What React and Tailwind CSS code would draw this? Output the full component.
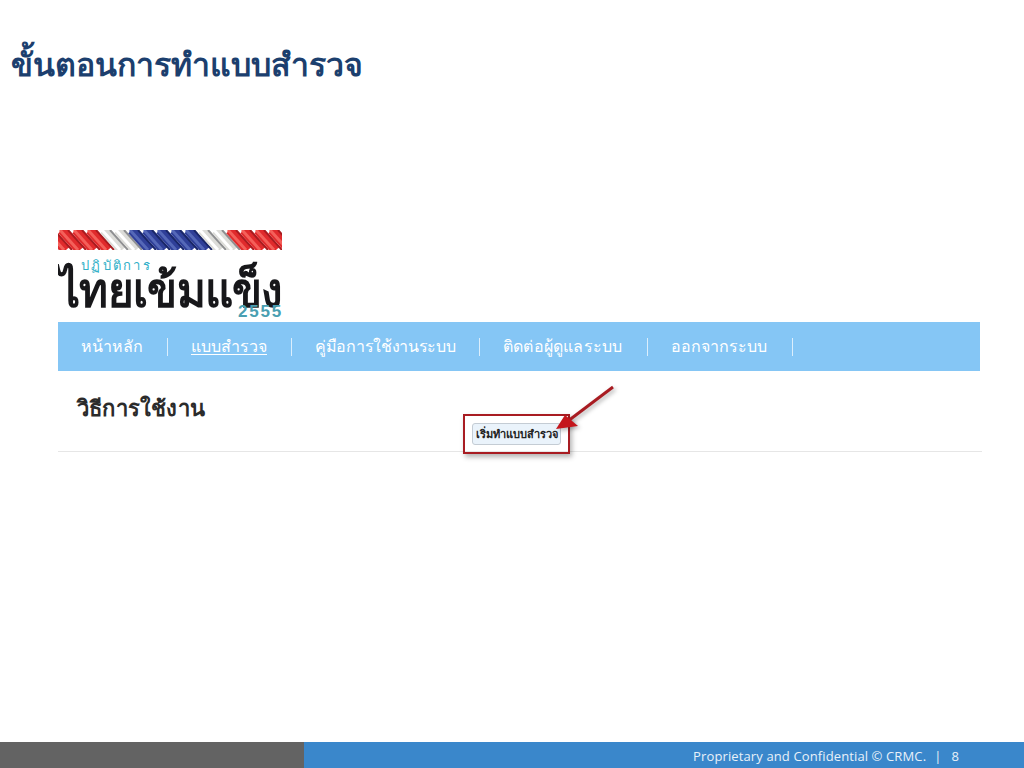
import React from "react";

const menu = [
  { label: "หน้าหลัก", cls: "w-[62px]" },
  { label: "แบบสำรวจ", cls: "w-[76px] underline underline-offset-2" },
  { label: "คู่มือการใช้งานระบบ", cls: "w-[140px] tracking-[-0.3px]" },
  { label: "ติดต่อผู้ดูแลระบบ", cls: "w-[120px] tracking-[0.2px]" },
  { label: "ออกจากระบบ", cls: "w-[97px]" },
];

const thai = "font-['Liberation_Sans','Noto_Sans','DejaVu_Sans',sans-serif]";

const red = ["#e02a2c", "#f4605a", "#a81c20"];
const white = ["#dcdcd8", "#ffffff", "#8f9092"];
const blue = ["#2f3f98", "#5568b8", "#1a2768"];

const ropeColor = (x) => {
  if (x < 40) return red;
  if (x < 72) return white;
  if (x < 132) return blue;
  if (x < 164) return white;
  return red;
};

// twisted rope strip from the logo
const Rope = () => {
  const strands = [];
  for (let x = -24; x < 240; x += 14) strands.push(x);
  return (
    <svg width="224" height="20" viewBox="0 0 224 20" className="block">
      {strands.map((x) => {
        const [base, light, dark] = ropeColor(x);
        return (
          <g key={x}>
            <path d={`M${x} 0l18 20`} stroke={base} strokeWidth="10" fill="none" />
            <path d={`M${x + 6} 0l18 20`} stroke={dark} strokeWidth="2" fill="none" />
            <path d={`M${x - 2} 0l18 20`} stroke={light} strokeWidth="3" fill="none" />
          </g>
        );
      })}
    </svg>
  );
};

const Logo = () => (
  <div className="w-[225px] h-[92px] overflow-hidden">
    <Rope />
    <div className={`relative h-[72px] ${thai}`}>
      <span className="absolute left-[23px] top-[9px] text-[13px] leading-none tracking-[2.3px] text-[#30b0c8]">ปฏิบัติการ</span>
      <span className="absolute left-0 top-[15px] text-[44px] leading-[50px] font-bold tracking-[-0.7px] scale-y-[1.1] text-[#17171a] whitespace-nowrap">ไทยเข้มแข็ง</span>
      <span className="absolute left-[180px] bottom-[2px] text-[17px] leading-none font-bold tracking-[1.8px] text-[#4a9fb2]">2555</span>
    </div>
  </div>
);

const App = () => {
  return (
    <div className="w-[1024px] h-[768px] bg-white flex flex-col overflow-hidden">
      <h1 className="pl-[11px] pt-[40px] h-[230px] text-[32px] leading-[50px] font-bold text-[#1c3f6e] font-['Liberation_Serif','Noto_Sans','DejaVu_Serif',serif]">
        ขั้นตอนการทำแบบสำรวจ
      </h1>

      <div className="pl-[58px] w-[982px] flex-1">
        <Logo />
        <nav className={`h-[49px] w-[922px] bg-[#85c6f5] flex items-center pl-[23px] text-[16px] text-white ${thai}`}>
          {menu.map((m) => (
            <React.Fragment key={m.label}>
              <span className={`whitespace-nowrap ${m.cls}`}>{m.label}</span>
              <span className="w-px h-[18px] bg-white/70 ml-[24px] mr-[23px]" />
            </React.Fragment>
          ))}
        </nav>
        <div className="relative h-[81px] w-[924px] border-b border-[#e6e6e6]">
          <h2 className={`pl-[19px] pt-[21px] text-[22px] tracking-[0.2px] leading-[34px] font-bold text-[#2b2b2b] ${thai}`}>วิธีการใช้งาน</h2>
          {/* start button with the red call-out over it */}
          <div className="absolute left-[405px] top-[43px] w-[107px] h-[40px] border-[2.5px] border-[#a81c22] shadow-[2px_3px_5px_rgba(0,0,0,0.3)] flex items-center justify-center">
            <button className={`w-[89px] h-[22px] rounded-[3px] border border-[#c4ccd4] bg-[#eaf3fb] text-[11px] leading-none font-bold text-[#222] whitespace-nowrap ${thai}`}>
              เริ่มทำแบบสำรวจ
            </button>
          </div>
          <svg className="absolute left-[490px] top-[12px] drop-shadow-[2px_2px_2px_rgba(0,0,0,0.3)]" width="75" height="55" viewBox="0 0 75 55">
            <path d="M65 4L20 38" stroke="#a81c22" strokeWidth="3" fill="none" />
            <path d="M8 46l9-14 13 11z" fill="#c4161c" />
          </svg>
        </div>
      </div>

      <footer className="h-[26px] flex">
        <div className="w-[304px] bg-[#636363]" />
        <div className="flex-1 bg-[#3a87cb] flex items-center justify-end pr-[65px] pt-[3px] text-[13px] tracking-[0.12px] text-[#e8f1f9] font-['Open_Sans',sans-serif]">
          <span>Proprietary and Confidential © CRMC.</span>
          <span className="ml-[8px]">|</span>
          <span className="ml-[10px]">8</span>
        </div>
      </footer>
    </div>
  );
};

export default App;
